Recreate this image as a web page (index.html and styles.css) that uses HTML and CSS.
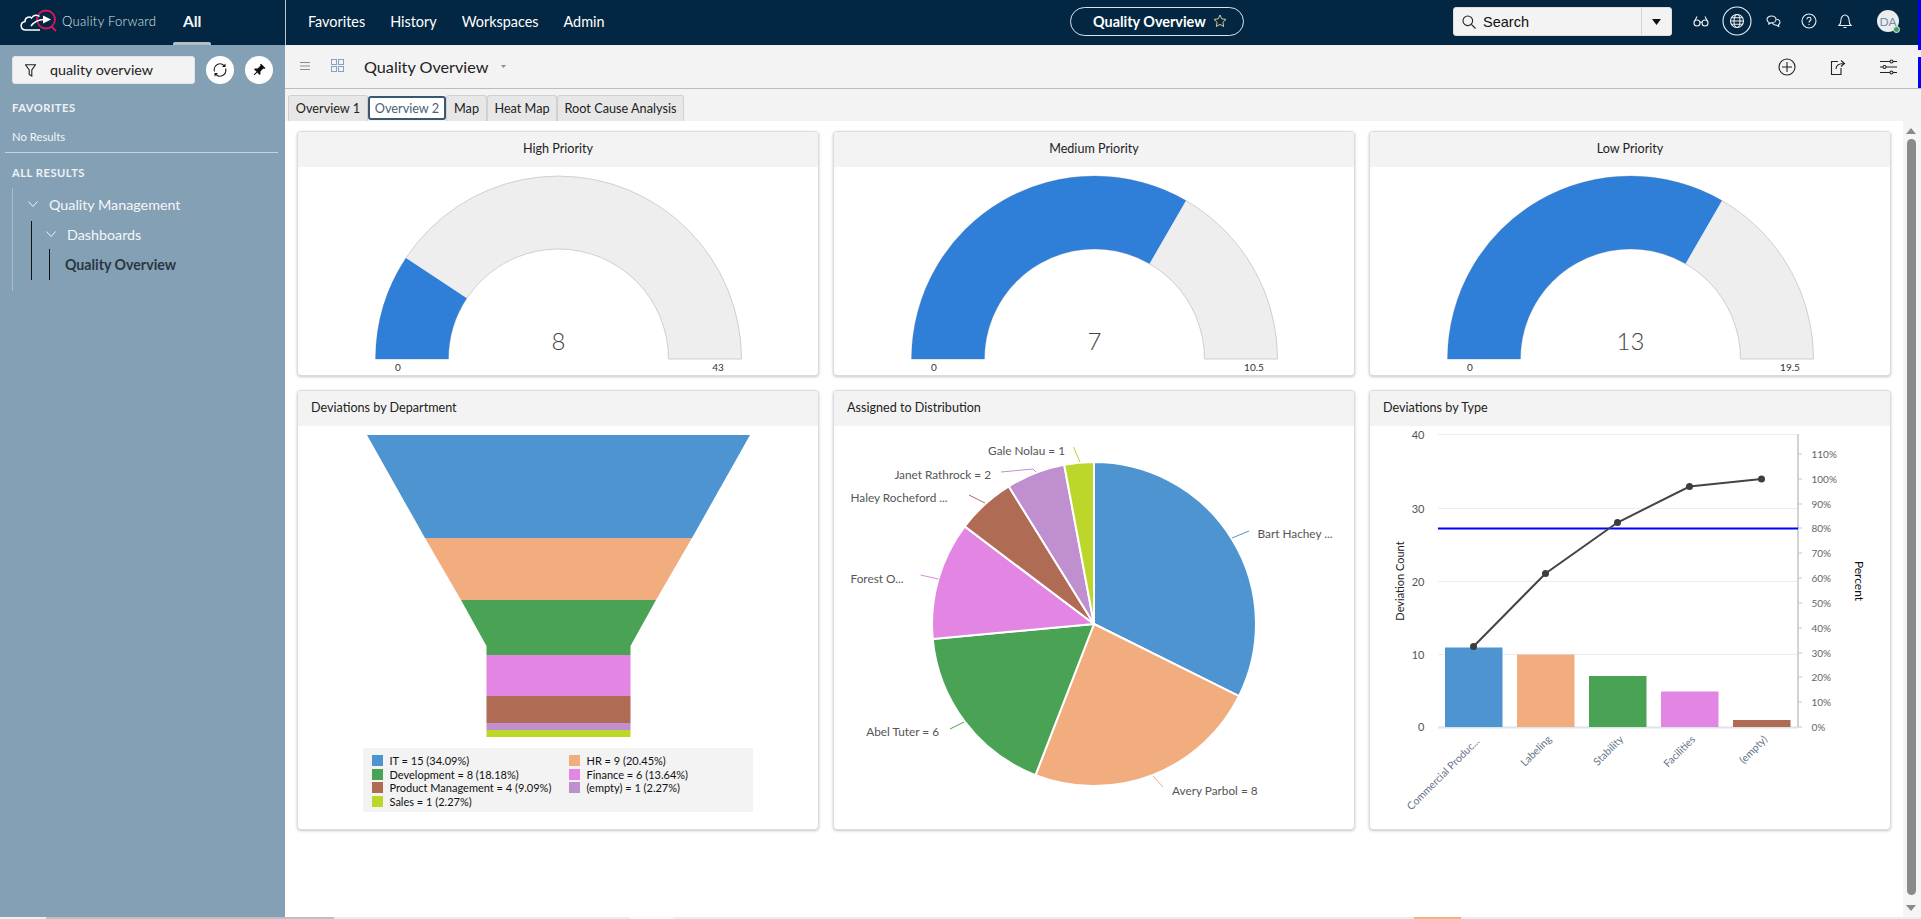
FILE: index.html
```html
<!DOCTYPE html>
<html lang="en">
<head>
<meta charset="utf-8">
<title>Quality Overview</title>
<link rel="stylesheet" href="styles.css">
</head>
<body>
<div class="app">
  <header class="topbar">
    <div class="brand">
      <svg class="logo" width="38" height="24" viewBox="20 10 38 24">
        <circle class="logo-q" cx="46" cy="20.5" r="9"/>
        <path class="logo-q" d="M51 27l5 5"/>
        <path class="logo-cloud" d="M40 31H26c-6 0-6.500-7.500-1-8.500 0-4 4-5.500 6.500-3.500 2-3.500 6-3.500 8-1.500"/>
        <path class="logo-arrow" d="M31 27c3-4 8-6.500 13-6.500"/>
        <path class="logo-head" d="M43 16.500l8 4-8 4z"/>
      </svg>
      <span class="brand-name">Quality Forward</span>
      <span class="brand-all">All</span>
    </div>
    <nav class="nav">
      <a>Favorites</a><a>History</a><a>Workspaces</a><a>Admin</a>
    </nav>
    <div class="pill">
      <span>Quality Overview</span>
      <svg width="14" height="14" viewBox="0 0 14 14"><path class="star" d="M7 1l1.800 3.900 4.200.5-3.100 2.900.8 4.200L7 10.400 3.300 12.500l.8-4.200L1 5.400l4.200-.5z"/></svg>
    </div>
    <div class="search">
      <svg class="search-icon" width="14" height="14" viewBox="0 0 14 14"><circle class="ink" cx="5.800" cy="5.800" r="4.800"/><path class="ink" d="M9.300 9.300l4.200 4.200"/></svg>
      <span class="search-text">Search</span>
      <span class="search-drop"><svg width="9" height="6" viewBox="0 0 9 6"><path class="solid" d="M0 0h9L4.500 6z"/></svg></span>
    </div>
    <div class="top-icons">
      <span class="top-icon"><svg width="16" height="12" viewBox="0 0 16 12"><circle class="wline" cx="4" cy="8" r="3"/><circle class="wline" cx="12" cy="8" r="3"/><path class="wline" d="M7 7.500q1-1 2 0M1.200 7L4 1.500M14.800 7L12 1.500"/></svg></span>
      <span class="top-icon globe-wrap"><svg width="30" height="30" viewBox="0 0 30 30"><circle class="wline" cx="15" cy="15" r="14"/><circle class="wline" cx="15" cy="15" r="6.500"/><ellipse class="wline" cx="15" cy="15" rx="3" ry="6.500"/><path class="wline" d="M8.500 15h13M9.500 11.800h11M9.500 18.200h11"/></svg></span>
      <span class="top-icon"><svg width="15" height="13" viewBox="0 0 15 13"><path class="wline" d="M5.500 1C3 1 1 2.500 1 4.500 1 5.800 1.800 6.800 3 7.400L2.800 9l2-1.100h.7C8 7.900 10 6.400 10 4.500S8 1 5.500 1z"/><path class="wline" d="M10.500 4.200c2 .2 3.500 1.500 3.500 3.100 0 1-.6 1.900-1.500 2.400l.2 1.800-2-1.300c-2 0-3.700-.9-4.300-2.300"/></svg></span>
      <span class="top-icon"><svg width="16" height="16" viewBox="0 0 16 16"><circle class="wline" cx="8" cy="8" r="7"/><path class="wline" d="M6 6.300c0-1.200 1-2 2.100-2S10 5.100 10 6.200c0 1.600-2 1.600-2 3.300M8 11v1"/></svg></span>
      <span class="top-icon"><svg width="14" height="15" viewBox="0 0 14 15"><path class="wline" d="M1 11.500c1.300-1 1.800-2 1.800-4.500C2.800 3.500 4.800 1 7 1s4.200 2.500 4.200 6c0 2.500.5 3.500 1.800 4.500zM5.500 13.500h3"/></svg></span>
      <span class="avatar">DA<i class="avatar-badge"></i></span>
    </div>
  </header>

  <div class="body">
    <aside class="sidebar">
      <div class="filter-row">
        <div class="filter">
          <svg width="11" height="13" viewBox="0 0 11 13"><path class="ink" d="M.5.700h10L6.800 6v6L4.200 10.500V6z"/></svg>
          <span class="filter-text">quality overview</span>
        </div>
        <span class="round-btn"><svg width="16" height="16" viewBox="0 0 16 16"><path class="ink" d="M2.500 9.500A5.800 5.800 0 0 1 12 3.500M13.500 6.500A5.800 5.800 0 0 1 4 12.500"/><path class="solid" d="M13.500 1.500v3.500H10zM2.500 14.500V11H6z"/></svg></span>
        <span class="round-btn"><svg width="14" height="14" viewBox="0 0 14 14"><g transform="rotate(45 7 7)"><path class="solid" d="M4 1h6v1.500L9 3v4l2 2v1H3V9l2-2V3L4 2.500zM6.500 10h1v4h-1z"/></g></svg></span>
      </div>
      <h2 class="side-head side-fav">FAVORITES</h2>
      <p class="no-results">No Results</p>
      <hr class="side-rule">
      <h2 class="side-head side-all">ALL RESULTS</h2>
      <div class="tree">
        <div class="tree-row tree-root">
          <svg width="10" height="6" viewBox="0 0 10 6"><path class="chev" d="M.5.500L5 5.500 9.500.500"/></svg>
          <span>Quality Management</span>
        </div>
        <div class="tree-l1">
          <div class="tree-row tree-dash">
            <svg width="10" height="6" viewBox="0 0 10 6"><path class="chev" d="M.5.500L5 5.500 9.500.500"/></svg>
            <span>Dashboards</span>
          </div>
          <div class="tree-l2">Quality Overview</div>
        </div>
      </div>
    </aside>

    <main class="main">
      <div class="toolbar">
        <svg class="tool-menu" width="10" height="8" viewBox="0 0 10 8"><path class="mute" d="M0 .5h10M0 4h10M0 7.500h10"/></svg>
        <svg class="tool-grid" width="13" height="13" viewBox="0 0 13 13"><rect class="gridline" x=".5" y=".5" width="5" height="5"/><rect class="gridline" x="7.500" y=".5" width="5" height="5"/><rect class="gridline" x=".5" y="7.500" width="5" height="5"/><rect class="gridline" x="7.500" y="7.500" width="5" height="5"/></svg>
        <span class="tool-title">Quality Overview</span>
        <svg class="tool-caret" width="5" height="3" viewBox="0 0 5 3"><path class="caret" d="M0 0h5L2.500 3z"/></svg>
        <div class="tool-right">
          <svg width="18" height="18" viewBox="0 0 18 18"><circle class="ink" cx="9" cy="9" r="8"/><path class="ink" d="M9 4v10M4 9h10"/></svg>
          <svg width="16" height="18" viewBox="0 0 16 18"><path class="ink" d="M8 3.500H1.500v13h9.500V10"/><path class="ink" d="M6 11c0-3.500 2-5.500 8-5.500M11 2.500l3.500 3-3.500 3"/></svg>
          <svg width="17" height="16" viewBox="0 0 17 16"><path class="ink" d="M0 2.500h10M13 2.500h4M0 8h3M6 8h11M0 13.500h10M13 13.500h4"/><circle class="ink" cx="11.500" cy="2.500" r="1.500"/><circle class="ink" cx="4.500" cy="8" r="1.500"/><circle class="ink" cx="11.500" cy="13.500" r="1.500"/></svg>
        </div>
      </div>

      <div class="tabs">
        <span class="tab tab-1">Overview 1</span>
        <span class="tab tab-2 tab-on">Overview 2</span>
        <span class="tab tab-3">Map</span>
        <span class="tab tab-4">Heat Map</span>
        <span class="tab tab-5">Root Cause Analysis</span>
      </div>

      <div class="content">
        <div class="dash">
          <section class="card">
            <h3 class="card-head centered">High Priority</h3>
            <svg class="chart gauge" width="520" height="208" viewBox="298 167 520 208">
              <path class="g-bg" d="M375.500 359A183 183 0 0 1 741.500 359H668.500A110 110 0 0 0 448.500 359Z"/>
              <path class="g-val" d="M375.500 359A183 183 0 0 1 405.900 258L466.800 298.300A110 110 0 0 0 448.500 359Z"/>
              <text class="g-num" x="558.500" y="350">8</text>
              <text class="g-lab" x="398" y="370.500">0</text>
              <text class="g-lab" x="718" y="370.500">43</text>
            </svg>
          </section>
          <section class="card">
            <h3 class="card-head centered">Medium Priority</h3>
            <svg class="chart gauge" width="520" height="208" viewBox="834 167 520 208">
              <path class="g-bg" d="M911.500 359A183 183 0 0 1 1277.500 359H1204.500A110 110 0 0 0 984.500 359Z"/>
              <path class="g-val" d="M911.500 359A183 183 0 0 1 1186 200.500L1149.500 263.700A110 110 0 0 0 984.500 359Z"/>
              <text class="g-num" x="1094.500" y="350">7</text>
              <text class="g-lab" x="934" y="370.500">0</text>
              <text class="g-lab" x="1254" y="370.500">10.5</text>
            </svg>
          </section>
          <section class="card">
            <h3 class="card-head centered">Low Priority</h3>
            <svg class="chart gauge" width="520" height="208" viewBox="1370 167 520 208">
              <path class="g-bg" d="M1447.500 359A183 183 0 0 1 1813.500 359H1740.500A110 110 0 0 0 1520.500 359Z"/>
              <path class="g-val" d="M1447.500 359A183 183 0 0 1 1722 200.500L1685.500 263.700A110 110 0 0 0 1520.500 359Z"/>
              <text class="g-num" x="1630.500" y="350">13</text>
              <text class="g-lab" x="1470" y="370.500">0</text>
              <text class="g-lab" x="1790" y="370.500">19.5</text>
            </svg>
          </section>

          <section class="card">
            <h3 class="card-head">Deviations by Department</h3>
            <div class="funnel-body">
              <svg class="funnel" width="520" height="313" viewBox="298 426 520 313">
                <path class="c1" d="M367 435H750L692 538H425Z"/>
                <path class="c2" d="M425 538H692L656 600H461Z"/>
                <path class="c3" d="M461 600H656L630.500 646V655H486.500V646Z"/>
                <path class="c4" d="M486.500 655H630.500V696H486.500Z"/>
                <path class="c5" d="M486.500 696H630.500V723H486.500Z"/>
                <path class="c6" d="M486.500 723H630.500V730H486.500Z"/>
                <path class="c7" d="M486.500 730H630.500V737H486.500Z"/>
              </svg>
              <ul class="legend">
                <li><i class="sw s1"></i>IT = 15 (34.09%)</li>
                <li><i class="sw s2"></i>HR = 9 (20.45%)</li>
                <li><i class="sw s3"></i>Development = 8 (18.18%)</li>
                <li><i class="sw s4"></i>Finance = 6 (13.64%)</li>
                <li><i class="sw s5"></i>Product Management = 4 (9.09%)</li>
                <li><i class="sw s6"></i>(empty) = 1 (2.27%)</li>
                <li><i class="sw s7"></i>Sales = 1 (2.27%)</li>
              </ul>
            </div>
          </section>

          <section class="card">
            <h3 class="card-head">Assigned to Distribution</h3>
            <svg class="chart" width="520" height="403" viewBox="834 426 520 403">
              <g class="pie">
                <path class="c1" d="M1094 624V462A162 162 0 0 1 1239 696.200Z"/>
                <path class="c2" d="M1094 624L1239 696.200A162 162 0 0 1 1035.500 775.100Z"/>
                <path class="c3" d="M1094 624L1035.500 775.100A162 162 0 0 1 932.700 638.900Z"/>
                <path class="c4" d="M1094 624L932.700 638.900A162 162 0 0 1 964.700 526.400Z"/>
                <path class="c5" d="M1094 624L964.700 526.400A162 162 0 0 1 1008.700 486.300Z"/>
                <path class="c6" d="M1094 624L1008.700 486.300A162 162 0 0 1 1064.200 464.700Z"/>
                <path class="c7" d="M1094 624L1064.200 464.700A162 162 0 0 1 1094 462Z"/>
              </g>
              <path class="l1" d="M1232 538L1249 531"/>
              <path class="l2" d="M1153 776L1163 787"/>
              <path class="l3" d="M964 722L950 729"/>
              <path class="l4" d="M938.500 579L920.500 575"/>
              <path class="l5" d="M985 503L969 495"/>
              <path class="l6" d="M1036 472L1033 469L1001 472"/>
              <path class="l7" d="M1080 462L1073.500 447"/>
              <text class="p-lab" x="1257.500" y="538">Bart Hachey ...</text>
              <text class="p-lab" x="1172" y="795">Avery Parbol = 8</text>
              <text class="p-lab end" x="939" y="736">Abel Tuter = 6</text>
              <text class="p-lab" x="850.500" y="583">Forest O...</text>
              <text class="p-lab" x="850.500" y="502">Haley Rocheford ...</text>
              <text class="p-lab end" x="991" y="479">Janet Rathrock = 2</text>
              <text class="p-lab end" x="1065" y="455">Gale Nolau = 1</text>
            </svg>
          </section>

          <section class="card">
            <h3 class="card-head">Deviations by Type</h3>
            <svg class="chart" width="520" height="403" viewBox="1370 426 520 403">
              <path class="grid" d="M1438 434.500H1798M1438 508.500H1798M1438 581.500H1798M1438 654.500H1798"/>
              <path class="xaxis" d="M1438 727.500H1798"/>
              <path class="yaxis" d="M1798 434V727"/>
              <path class="tick" d="M1798 454h4M1798 479h4M1798 504h4M1798 528h4M1798 553h4M1798 578h4M1798 603h4M1798 628h4M1798 653h4M1798 677h4M1798 702h4M1798 727h4"/>
              <rect class="c1" x="1445" y="647.500" width="57.500" height="79.500"/>
              <rect class="c2" x="1517" y="654.500" width="57.500" height="72.500"/>
              <rect class="c3" x="1589" y="676" width="57.500" height="51"/>
              <rect class="c4" x="1661" y="691.500" width="57.500" height="35.500"/>
              <rect class="c5" x="1733" y="720" width="57.500" height="7"/>
              <path class="goal" d="M1438 528.500H1798"/>
              <path class="trend" d="M1473.500 646.500L1545.500 573.500L1617.500 522.500L1689.500 486.500L1761.500 479"/>
              <circle class="dot" cx="1473.500" cy="646.500" r="3.500"/>
              <circle class="dot" cx="1545.500" cy="573.500" r="3.500"/>
              <circle class="dot" cx="1617.500" cy="522.500" r="3.500"/>
              <circle class="dot" cx="1689.500" cy="486.500" r="3.500"/>
              <circle class="dot" cx="1761.500" cy="479" r="3.500"/>
              <text class="y-lab" x="1424.500" y="439">40</text>
              <text class="y-lab" x="1424.500" y="512.500">30</text>
              <text class="y-lab" x="1424.500" y="585.500">20</text>
              <text class="y-lab" x="1424.500" y="658.500">10</text>
              <text class="y-lab" x="1424.500" y="731">0</text>
              <text class="r-lab" x="1811.500" y="457.500">110%</text>
              <text class="r-lab" x="1811.500" y="483">100%</text>
              <text class="r-lab" x="1811.500" y="507.500">90%</text>
              <text class="r-lab" x="1811.500" y="532">80%</text>
              <text class="r-lab" x="1811.500" y="557">70%</text>
              <text class="r-lab" x="1811.500" y="582">60%</text>
              <text class="r-lab" x="1811.500" y="607">50%</text>
              <text class="r-lab" x="1811.500" y="631.500">40%</text>
              <text class="r-lab" x="1811.500" y="656.500">30%</text>
              <text class="r-lab" x="1811.500" y="681">20%</text>
              <text class="r-lab" x="1811.500" y="706">10%</text>
              <text class="r-lab" x="1811.500" y="730.500">0%</text>
              <text class="x-lab" transform="translate(1480 742) rotate(-45)">Commercial Produc...</text>
              <text class="x-lab" transform="translate(1552 740) rotate(-45)">Labeling</text>
              <text class="x-lab" transform="translate(1624 740) rotate(-45)">Stability</text>
              <text class="x-lab" transform="translate(1696 740) rotate(-45)">Facilities</text>
              <text class="x-lab" transform="translate(1768 740) rotate(-45)">(empty)</text>
              <text class="t-left" transform="translate(1403.500 581) rotate(-90)">Deviation Count</text>
              <text class="t-right" transform="translate(1854.500 581) rotate(90)">Percent</text>
            </svg>
          </section>
        </div>
        <div class="scrollbar">
          <svg class="sb-up" width="10" height="6" viewBox="0 0 10 6"><path class="sb-arrow" d="M5 0l5 6H0z"/></svg>
          <span class="sb-thumb"></span>
          <svg class="sb-down" width="10" height="6" viewBox="0 0 10 6"><path class="sb-arrow" d="M0 0h10L5 6z"/></svg>
        </div>
      </div>
    </main>
  </div>

  <div class="strip">
    <span class="sg sg-a"></span><span class="sg sg-b"></span><span class="sg sg-c"></span><span class="sg sg-d"></span><span class="sg sg-e"></span><span class="sg sg-f"></span><span class="sg sg-g"></span>
  </div>
  <i class="edge edge-top"></i><i class="edge edge-low"></i>
</div>
</body>
</html>
```
FILE: styles.css
```css
* { box-sizing: border-box; }
html, body { margin: 0; height: 100%; overflow: hidden; }
body { font-family: "Lato", "Liberation Sans", sans-serif; color: #222; background: #fff; }
h2, h3, p, ul { margin: 0; padding: 0; font-weight: 400; }
svg { display: block; flex: none; }

.app { position: relative; height: 919px; display: flex; flex-direction: column; overflow: hidden; }

/* top bar */
.topbar { flex: 0 0 45px; display: flex; align-items: center; background: #032743; color: #fff; }
.brand { flex: 0 0 286px; height: 45px; display: flex; align-items: center; border-right: 1px solid #b9c4cf; padding: 0 0 3px 20px; position: relative; }
.brand-name { margin-left: 4px; font-size: 13px; font-weight: 300; letter-spacing: .3px; color: #dfe4e9; width: 121px; white-space: nowrap; }
.brand-all { font-size: 15.500px; font-weight: 700; color: #f4f6f8; }
.brand-all::after { content: ""; position: absolute; left: 173px; width: 38px; bottom: 0; height: 3px; background: #b4bec8; border-radius: 2px 2px 0 0; }
.logo-q { fill: none; stroke: #d6175f; stroke-width: 1.800; }
.logo-cloud { fill: none; stroke: #fff; stroke-width: 1.500; }
.logo-arrow { fill: none; stroke: #fff; stroke-width: 1.500; }
.logo-head { fill: #fff; }

.nav { flex: 0 0 784px; display: flex; gap: 25px; padding: 0 0 3px 22px; font-size: 14.400px; }
.nav a { color: #fff; }

.pill { flex: 0 0 174px; height: 29px; margin-top: -2px; border: 1px solid #dfe3e7; border-radius: 15px; display: flex; align-items: center; gap: 7px; padding: 0 0 1px 22px; font-size: 14.400px; font-weight: 700; white-space: nowrap; }
.star { fill: none; stroke: #dbc995; stroke-width: 1; }

.search { margin: -2px 0 0 209px; flex: 0 0 219px; height: 29px; background: #f3f3f3; border-radius: 3px; border: 1px solid #dedede; display: flex; align-items: center; color: #111; }
.search-icon { margin-left: 8px; }
.search-text { margin-left: 7px; font-family: "Liberation Sans", sans-serif; font-size: 14.500px; flex: 1; }
.search-drop { flex: 0 0 30px; height: 100%; border-left: 1px solid #d4d4d4; display: flex; align-items: center; justify-content: center; }
.ink { fill: none; stroke: #222; stroke-width: 1.100; }
.solid { fill: #111; }

.top-icons { margin: -3px 0 0 11px; display: flex; align-items: center; }
.top-icon { flex: 0 0 36px; display: flex; justify-content: center; align-items: center; }
.wline { fill: none; stroke: #eef1f4; stroke-width: 1.100; }
.avatar { position: relative; margin-left: 14px; flex: 0 0 22px; width: 22px; height: 22px; border-radius: 50%; background: #e9edf0; color: #7a8da0; font-size: 12px; display: flex; align-items: center; justify-content: center; }
.avatar-badge { position: absolute; right: -1px; bottom: -1px; width: 7px; height: 7px; border-radius: 50%; background: #3f9e5a; border: 1px solid #e9edf0; }

.edge { position: absolute; right: 0; width: 3px; background: #0000ff; }
.edge-top { top: 0; height: 50px; }
.edge-low { top: 57px; height: 31px; }

/* body */
.body { flex: 1; display: flex; min-height: 0; }
.sidebar { flex: 0 0 285px; background: #84a0b5; padding: 11px 0 0 12px; color: #fff; }
.filter-row { display: flex; align-items: center; gap: 11px; }
.filter { flex: 0 0 183px; height: 28px; background: #f3f3f3; border: 1px solid #dfe4e8; border-radius: 3px; display: flex; align-items: center; padding-left: 12px; gap: 14px; font-size: 14.300px; color: #222; }
.filter-text { padding-bottom: 2px; }
.round-btn { flex: 0 0 28px; height: 28px; border-radius: 50%; background: #fff; display: flex; align-items: center; justify-content: center; }
.side-head { font-size: 11.200px; font-weight: 700; letter-spacing: .5px; line-height: 16px; color: #eef2f5; }
.side-fav { margin-top: 16px; }
.no-results { margin-top: 13px; font-size: 11.300px; line-height: 16px; color: #f2f5f7; }
.side-rule { margin: 7px 0 0 -7px; width: 273px; border: 0; border-top: 1px solid #c6d1da; height: 0; }
.side-all { margin-top: 12px; }
.tree { margin-top: 7px; height: 103px; border-left: 1px solid #a9bccb; padding-top: 4px; }
.tree-row { display: flex; align-items: center; height: 24px; font-size: 14.300px; color: #f5f7f9; }
.chev { fill: none; stroke: #eef2f5; stroke-width: 1; }
.tree-root { padding-left: 15px; gap: 11px; }
.tree-l1 { margin: 5px 0 0 18px; height: 59px; border-left: 1px solid #111; padding-top: 1px; }
.tree-dash { padding-left: 14px; gap: 11px; }
.tree-l2 { margin: 3px 0 0 17px; height: 31px; border-left: 1px solid #111; padding: 4px 0 0 16px; line-height: 24px; font-size: 14.200px; font-weight: 700; color: #2b3742; text-indent: -1px; white-space: nowrap; }

.main { flex: 1; min-width: 0; display: flex; flex-direction: column; }
.toolbar { flex: 0 0 44px; display: flex; align-items: center; background: #f3f3f3; border-bottom: 1px solid #bdbdbd; padding: 0 24px 0 15px; }
.tool-menu { margin-top: -2px; }
.mute { fill: none; stroke: #7f8f9e; stroke-width: 1; }
.tool-grid { margin: -2px 0 0 21px; }
.gridline { fill: none; stroke: #86a4bf; stroke-width: 1; }
.tool-title { margin-left: 20px; font-size: 16.200px; color: #222; }
.tool-caret { margin-left: 13px; }
.caret { fill: #7f8f9e; }
.tool-right { margin-left: auto; display: flex; align-items: center; gap: 34px; }

.tabs { flex: 0 0 32px; display: flex; align-items: flex-end; background: #f3f3f3; padding-left: 3px; font-size: 12.700px; color: #222; }
.tab { height: 26px; display: flex; align-items: center; justify-content: center; padding-bottom: 2px; background: #e7e7e7; border: 1px solid #d0d0d0; border-bottom: 0; border-radius: 3px 3px 0 0; white-space: nowrap; }
.tab-1 { flex: 0 0 80px; }
.tab-2 { flex: 0 0 78px; }
.tab-3 { flex: 0 0 41px; }
.tab-4 { flex: 0 0 70px; }
.tab-5 { flex: 0 0 127px; }
.tab-on { height: 24px; margin-bottom: 1px; padding-bottom: 1px; background: #fff; border: 2px solid #3b5873; border-radius: 3px; color: #4b6076; }

.content { flex: 1; min-height: 0; display: flex; }
.dash { flex: 1; min-width: 0; display: grid; grid-template-columns: repeat(3, 522px); grid-template-rows: 245px 440px; gap: 14px; padding: 10px 0 0 12px; background: #fff; align-content: start; }
.card { border: 1px solid #dcdcdc; border-radius: 4px; background: #fff; box-shadow: 0 1px 3px rgba(0,0,0,.22); overflow: hidden; display: flex; flex-direction: column; }
.card-head { flex: 0 0 35px; background: #f3f3f3; font-size: 12.600px; line-height: 33px; padding-left: 13px; color: #222; white-space: nowrap; }
.centered { padding-left: 0; text-align: center; }

.g-bg { fill: #eeeeee; stroke: #cfcfcf; stroke-width: 1; }
.g-val { fill: #2f7ed8; }
.g-num { font-size: 24px; font-weight: 300; fill: #444; text-anchor: middle; }
.g-lab { font-size: 10px; fill: #333; text-anchor: middle; }

.c1 { fill: #4d94d1; }
.c2 { fill: #f2ad7e; }
.c3 { fill: #4aa354; }
.c4 { fill: #e386e3; }
.c5 { fill: #b06b55; }
.c6 { fill: #c08fd0; }
.c7 { fill: #bcd729; }

.funnel-body { display: flex; flex-direction: column; align-items: center; }
.legend { list-style: none; width: 390px; height: 64px; margin-top: 9px; padding: 6px 0 0 9px; background: #f3f3f3; display: grid; grid-template-columns: 197px 1fr; grid-auto-rows: 13.500px; font-size: 11px; color: #111; }
.legend li { display: flex; align-items: center; white-space: nowrap; }
.sw { flex: 0 0 11px; height: 11px; margin-right: 6.500px; }
.s1 { background: #4d94d1; }
.s2 { background: #f2ad7e; }
.s3 { background: #4aa354; }
.s4 { background: #e386e3; }
.s5 { background: #b06b55; }
.s6 { background: #c08fd0; }
.s7 { background: #bcd729; }

.pie path { stroke: #fff; stroke-width: 2; stroke-linejoin: round; }
.l1, .l2, .l3, .l4, .l5, .l6, .l7 { fill: none; stroke-width: 1; }
.l1 { stroke: #4d94d1; }
.l2 { stroke: #f2ad7e; }
.l3 { stroke: #4aa354; }
.l4 { stroke: #e386e3; }
.l5 { stroke: #b06b55; }
.l6 { stroke: #c08fd0; }
.l7 { stroke: #bcd729; }
.p-lab { font-size: 11.800px; fill: #555; }
.end { text-anchor: end; }

.grid { fill: none; stroke: #ececec; stroke-width: 1; }
.xaxis { fill: none; stroke: #dde3ea; stroke-width: 2; }
.yaxis { fill: none; stroke: #c4c4c4; stroke-width: 1.500; }
.tick { fill: none; stroke: #c4c4c4; stroke-width: 1; }
.goal { fill: none; stroke: #0000ff; stroke-width: 2; }
.trend { fill: none; stroke: #444; stroke-width: 2; }
.dot { fill: #3d3d3d; }
.y-lab { font-size: 11px; fill: #555; text-anchor: end; }
.r-lab { font-size: 10px; fill: #666; }
.x-lab { font-size: 10.500px; fill: #667488; text-anchor: end; }
.t-left { font-size: 11px; fill: #222; text-anchor: middle; }
.t-right { font-size: 12px; fill: #111; text-anchor: middle; }

.scrollbar { flex: 0 0 18px; background: #f5f5f5; display: flex; flex-direction: column; align-items: center; padding: 7px 2px 0 0; }
.sb-arrow { fill: #8a8a8a; }
.sb-thumb { width: 9px; height: 756px; margin-top: 5px; border-radius: 5px; background: #8a8a8a; }
.sb-down { margin-top: 10px; }

.strip { flex: 0 0 2px; display: flex; }
.sg-a { flex: 0 0 46px; background: #f0f0f0; }
.sg-b { flex: 0 0 288px; background: #c0c0c0; }
.sg-c { flex: 0 0 296px; background: #ececec; }
.sg-d { flex: 0 0 43px; background: #f8f8f8; }
.sg-e { flex: 0 0 741px; background: #ececec; }
.sg-f { flex: 0 0 47px; background: #f5b27a; }
.sg-g { flex: 1; background: #ececec; }
```
